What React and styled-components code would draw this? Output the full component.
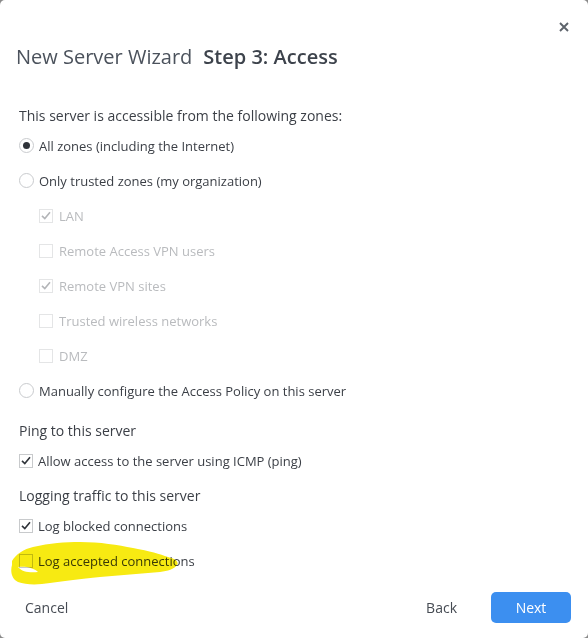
import React from "react";
import styled, { createGlobalStyle } from "styled-components";

const Global = createGlobalStyle`
  html, body { margin: 0; padding: 0; background: #8a8a8a; }
  body { font-family: "Open Sans", "Liberation Sans", sans-serif; }
  * { box-sizing: border-box; }
`;

const Modal = styled.div`
  position: relative;
  width: 588px;
  height: 638px;
  background: #fff;
  border-radius: 5px;
  display: flex;
  flex-direction: column;
  overflow: hidden;
`;

const CloseRow = styled.div`
  display: flex;
  justify-content: flex-end;
  padding: 17px 14px 0 0;
  height: 37px;
`;

const CloseButton = styled.button`
  border: 0;
  background: none;
  width: 20px;
  height: 20px;
  padding: 0;
  display: flex;
  align-items: center;
  justify-content: center;
  cursor: pointer;
`;

const Title = styled.h1`
  margin: 6px 0 0 16px;
  font-size: 20px;
  line-height: 28px;
  font-weight: 400;
  color: #4b525c;
  white-space: nowrap;
`;

const Step = styled.span`
  font-weight: 600;
  color: #3d434c;
  margin-left: 11px;
`;

const Content = styled.div`
  padding: 32px 0 0 19px;
  display: flex;
  flex-direction: column;
`;

const SectionHeading = styled.div`
  height: 25px;
  display: flex;
  align-items: center;
  font-size: 14px;
  color: #3b3f46;
  margin-top: ${(p) => p.$gap || 0}px;
`;

const Row = styled.label`
  height: 35px;
  display: flex;
  align-items: center;
  gap: ${(p) => (p.$sub ? "6px" : "5px")};
  padding-left: ${(p) => (p.$sub ? "20px" : "0")};
  font-size: 13px;
  color: ${(p) => (p.$disabled ? "#b9bbbe" : "#3b3f46")};
`;

const RadioCircle = styled.span`
  width: 15px;
  height: 15px;
  border-radius: 50%;
  border: 1px solid #c9cbce;
  background: #fff;
  display: flex;
  align-items: center;
  justify-content: center;
  flex: none;
  &::after {
    content: "";
    width: 7px;
    height: 7px;
    border-radius: 50%;
    background: ${(p) => (p.$checked ? "#2f3339" : "transparent")};
  }
`;

const Box = styled.span`
  width: 14px;
  height: 14px;
  border: 1px solid ${(p) => (p.$disabled ? "#e4e5e6" : "#c8cacc")};
  background: #fff;
  display: flex;
  align-items: center;
  justify-content: center;
  flex: none;
`;

const Footer = styled.div`
  margin-top: auto;
  display: flex;
  align-items: center;
  padding: 0 17px 15px 25px;
  height: 46px;
`;

const TextButton = styled.button`
  border: 0;
  background: none;
  font-family: inherit;
  font-size: 14px;
  color: #464b53;
  padding: 0;
  height: 31px;
  cursor: pointer;
  margin-right: ${(p) => (p.$push ? "auto" : "0")};
`;

const PrimaryButton = styled.button`
  border: 0;
  background: #3c8ff0;
  color: #fff;
  font-family: inherit;
  font-size: 14px;
  width: 80px;
  height: 31px;
  border-radius: 5px;
  margin-left: 34px;
  cursor: pointer;
`;

const Highlight = styled.svg`
  position: absolute;
  left: 0;
  top: 530px;
  mix-blend-mode: multiply;
  pointer-events: none;
`;

function Check({ color }) {
  return (
    <svg width="10" height="9" viewBox="0 0 10 9">
      <path d="M1 4.8 L3.8 7.5 L9 1.2" fill="none" stroke={color} strokeWidth="1.6" />
    </svg>
  );
}

function Radio({ checked, children }) {
  return (
    <Row>
      <RadioCircle $checked={checked} />
      {children}
    </Row>
  );
}

function CheckRow({ checked, sub, disabled, children }) {
  return (
    <Row $sub={sub} $disabled={disabled}>
      <Box $disabled={disabled}>
        {checked && <Check color={disabled ? "#b3b5b8" : "#2f3339"} />}
      </Box>
      {children}
    </Row>
  );
}

export default function App() {
  return (
    <>
      <Global />
      <Modal>
        <CloseRow>
          <CloseButton aria-label="Close">
            <svg width="10" height="10" viewBox="0 0 10 10">
              <path d="M1 1 L9 9 M9 1 L1 9" stroke="#5d636b" strokeWidth="1.9" />
            </svg>
          </CloseButton>
        </CloseRow>
        <Title>
          New Server Wizard<Step>Step 3: Access</Step>
        </Title>
        <Content>
          <SectionHeading>This server is accessible from the following zones:</SectionHeading>
          <Radio checked>All zones (including the Internet)</Radio>
          <Radio>Only trusted zones (my organization)</Radio>
          <CheckRow sub disabled checked>LAN</CheckRow>
          <CheckRow sub disabled>Remote Access VPN users</CheckRow>
          <CheckRow sub disabled checked>Remote VPN sites</CheckRow>
          <CheckRow sub disabled>Trusted wireless networks</CheckRow>
          <CheckRow sub disabled>DMZ</CheckRow>
          <Radio>Manually configure the Access Policy on this server</Radio>
          <SectionHeading $gap={10}>Ping to this server</SectionHeading>
          <CheckRow checked>Allow access to the server using ICMP (ping)</CheckRow>
          <SectionHeading $gap={5}>Logging traffic to this server</SectionHeading>
          <CheckRow checked>Log blocked connections</CheckRow>
          <CheckRow>Log accepted connections</CheckRow>
        </Content>
        <Footer>
          <TextButton $push>Cancel</TextButton>
          <TextButton>Back</TextButton>
          <PrimaryButton>Next</PrimaryButton>
        </Footer>
        <Highlight width="200" height="60" viewBox="0 0 200 60">
          <path
            d="M12 31 C 16 24, 24 19, 33 17 C 50 13, 65 12, 80 12 C 100 12, 118 15, 133 18 C 150 21, 160 24, 168 27 C 176 29, 179 32, 177 35 C 174 39, 168 41, 160 42 C 140 44, 120 45, 100 47 C 80 49, 65 51, 50 53 C 38 55, 26 55, 18 52 C 12 49, 10 42, 12 35 Z M 18 37 C 22 42, 30 43, 38 42 C 34 38, 26 36, 18 37 Z"
            fill="#f7ea12"
            fillRule="evenodd"
          />
        </Highlight>
      </Modal>
    </>
  );
}
